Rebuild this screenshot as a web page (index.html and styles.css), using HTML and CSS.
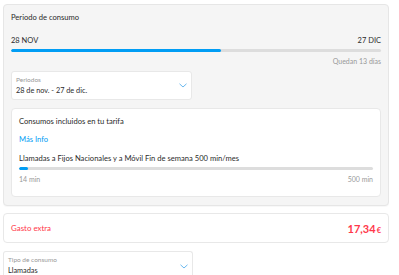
FILE: index.html
```html
<!DOCTYPE html>
<html lang="es">
<head>
<meta charset="utf-8">
<link rel="stylesheet" href="styles.css">
</head>
<body>
<div class="page">
  <section class="period-card">
    <div class="title">Periodo de consumo</div>
    <div class="dates"><span>28 NOV</span><span>27 DIC</span></div>
    <div class="bar"><div class="fill" style="width:56.8%"></div></div>
    <div class="remaining">Quedan 13 días</div>
    <div class="select select-period">
      <div class="select-text">
        <div class="select-label">Periodos</div>
        <div class="select-value">28 de nov. - 27 de dic.</div>
      </div>
      <svg class="chev" width="8" height="5" viewBox="0 0 8 5"><path d="M0.5 0.8 L4 4 L7.5 0.8" fill="none" stroke="#6ab8ee" stroke-width="1"/></svg>
    </div>
    <div class="inner-card">
      <div class="inner-title">Consumos incluidos en tu tarifa</div>
      <a class="more">Más Info</a>
      <div class="usage-name">Llamadas a Fijos Nacionales y a Móvil Fin de semana 500 min/mes</div>
      <div class="bar small"><div class="fill" style="width:2.6%"></div></div>
      <div class="usage-range"><span>14 min</span><span>500 min</span></div>
    </div>
  </section>
  <section class="extra-card">
    <span class="extra-label">Gasto extra</span>
    <span class="extra-amount">17,34<span class="eur">€</span></span>
  </section>
  <div class="select select-type">
    <div class="select-text">
      <div class="select-label">Tipo de consumo</div>
      <div class="select-value">Llamadas</div>
    </div>
    <svg class="chev" width="8" height="5" viewBox="0 0 8 5"><path d="M0.5 0.8 L4 4 L7.5 0.8" fill="none" stroke="#6ab8ee" stroke-width="1"/></svg>
  </div>
</div>
</body>
</html>
```
FILE: styles.css
```css
html, body { margin: 0; padding: 0; background: #fff; }
body { font-family: Lato, "Open Sans", sans-serif; color: #2b2b2b; font-size: 8px; }
.page { padding: 4px 10px 0 3px; }
.period-card {
  background: #f5f5f5;
  border: 1px solid #e6e6e6;
  border-radius: 4px;
  padding: 6px 7px 8px 7px;
  box-shadow: 0 1px 1px rgba(0,0,0,0.03);
}
.title { font-size: 7.6px; line-height: 12px; }
.dates { display: flex; justify-content: space-between; margin-top: 13px; font-size: 7.5px; line-height: 10px; }
.bar { height: 3px; background: #dddddd; border-radius: 2px; margin-top: 3px; overflow: hidden; }
.bar .fill { height: 100%; background: #019df4; border-radius: 2px; }
.remaining { text-align: right; color: #999; font-size: 7px; line-height: 10px; margin-top: 4px; }
.select {
  background: #fff;
  border: 1px solid #e8e8e8;
  border-radius: 3px;
  display: flex;
  align-items: flex-start;
  justify-content: space-between;
  padding: 3px 4px 0 4px;
  box-sizing: border-box;
}
.select-period { width: 181px; height: 29px; margin-top: 5px; }
.select-label { font-size: 6.5px; line-height: 10px; color: #999; }
.select-value { font-size: 7.3px; line-height: 11px; }
.chev { display: block; align-self: center; margin-top: -3px; }
.inner-card {
  background: #fff;
  border: 1px solid #e8e8e8;
  border-radius: 4px;
  margin-top: 8px;
  padding: 6px 7px 12px 7px;
}
.inner-title { font-size: 7.6px; line-height: 12px; }
.more { display: block; color: #019df4; font-size: 7.6px; line-height: 12px; margin-top: 6px; }
.usage-name { font-size: 7.6px; line-height: 12px; margin-top: 7px; }
.bar.small { margin-top: 3px; }
.usage-range { display: flex; justify-content: space-between; color: #999; font-size: 7px; line-height: 10px; margin-top: 4px; }
.extra-card {
  margin-top: 7px;
  background: #fff;
  border: 1px solid #e8e8e8;
  border-radius: 4px;
  height: 30px;
  box-sizing: border-box;
  display: flex;
  align-items: center;
  justify-content: space-between;
  padding: 0 7px;
}
.extra-label { color: #ff374a; font-size: 7.9px; }
.extra-amount { color: #ff374a; font-size: 11px; font-weight: 700; }
.eur { font-size: 7.5px; margin-left: 1px; }
.select-type { width: 190px; height: 30px; margin-top: 8px; border-bottom: none; border-radius: 3px 3px 0 0; }
```
